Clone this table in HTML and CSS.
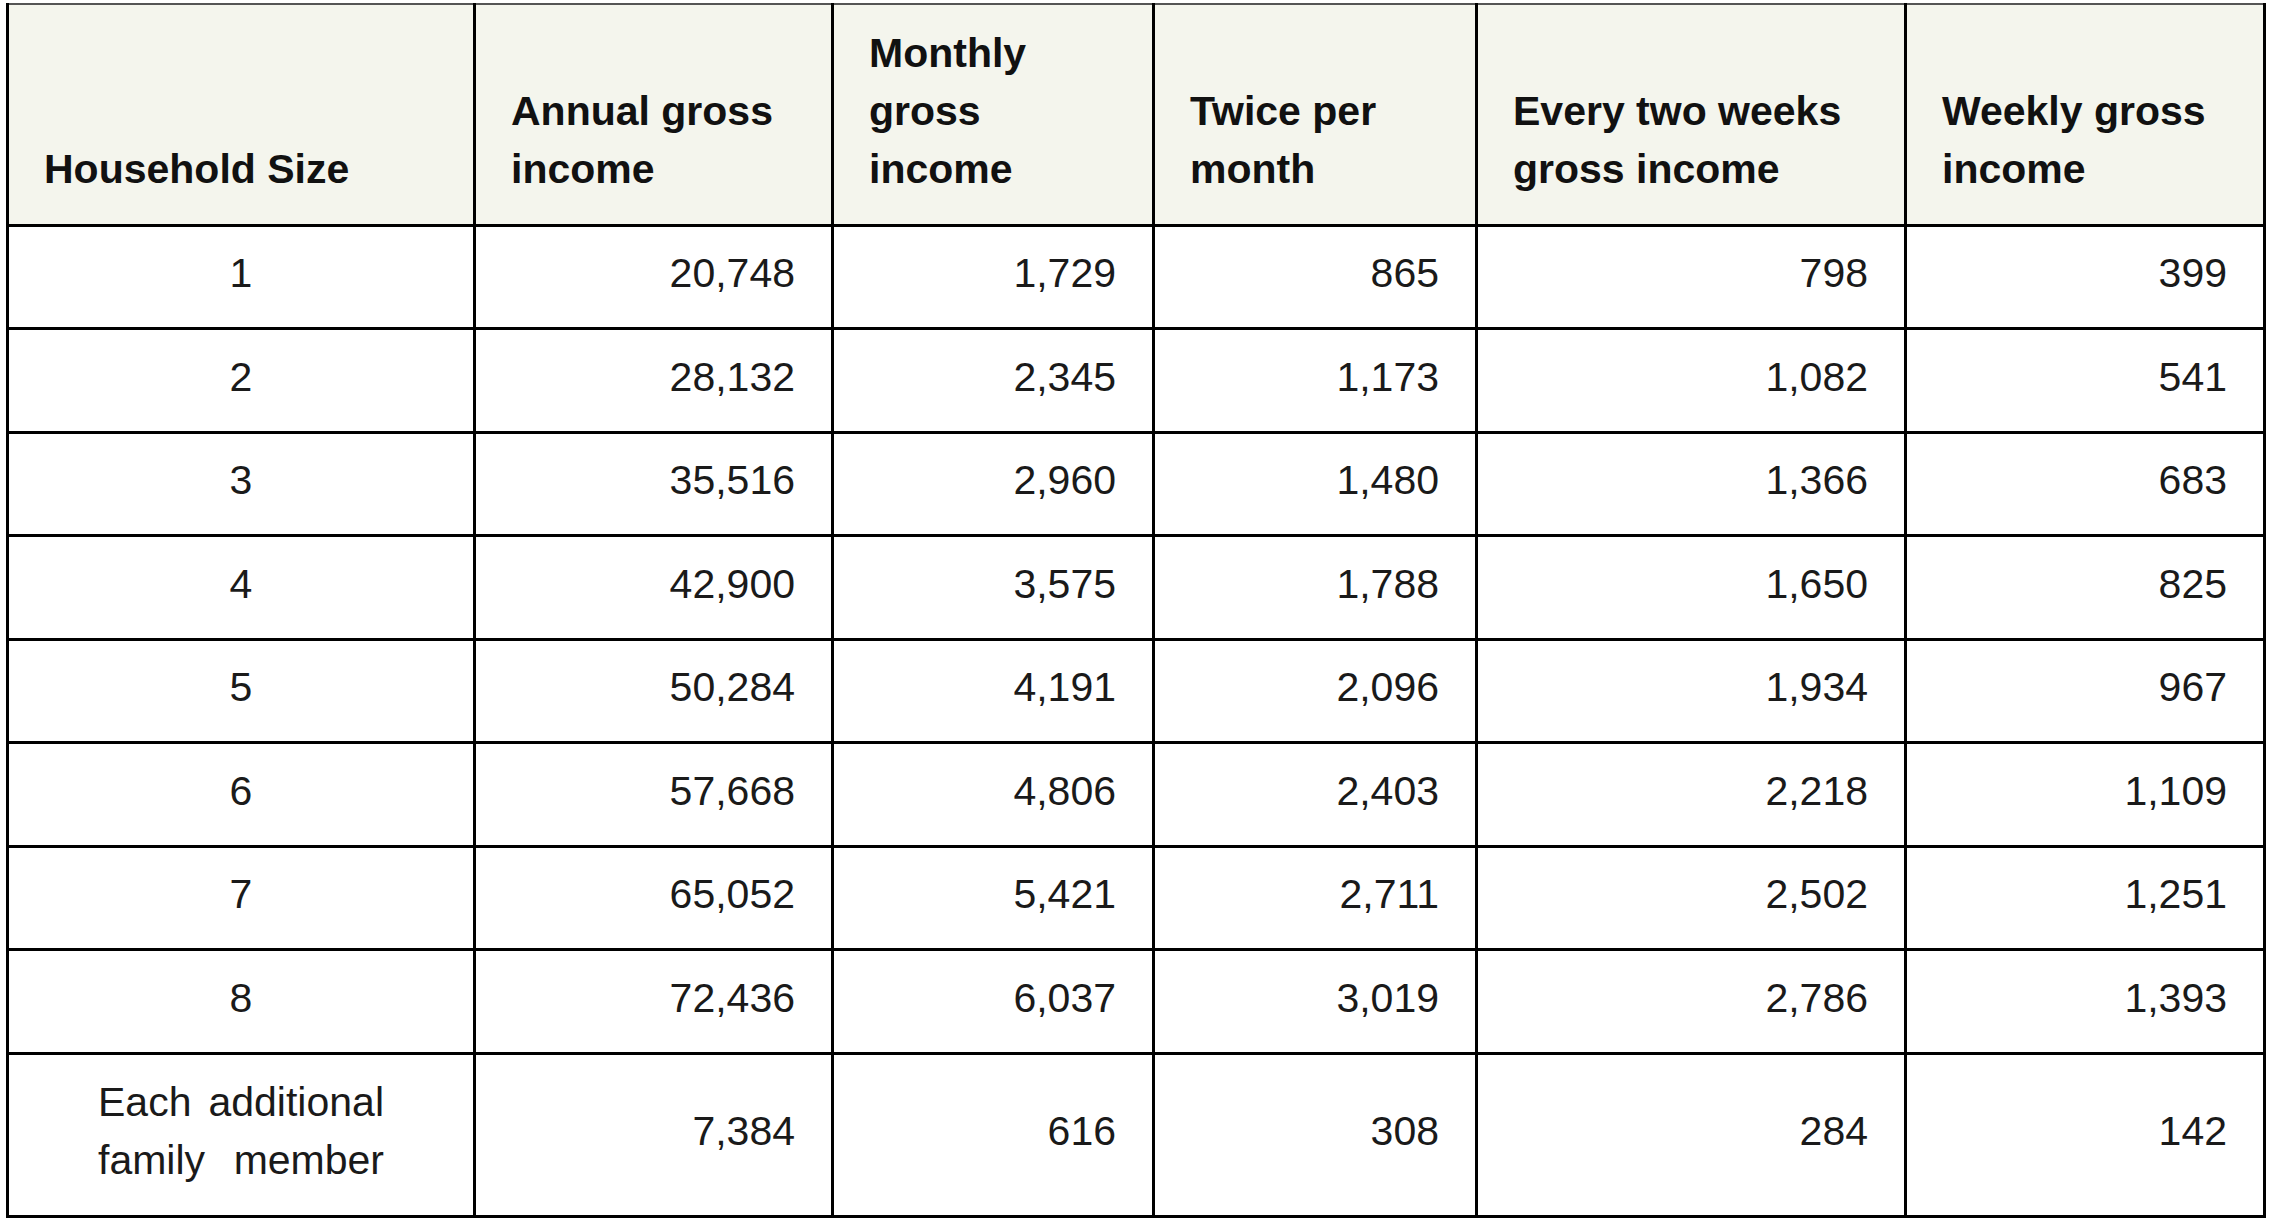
FILE: index.html
```html
<!DOCTYPE html>
<html lang="en">
<head>
<meta charset="utf-8">
<title>Household income limits</title>
<link rel="stylesheet" href="styles.css">
</head>
<body>
<table class="income-table">
  <colgroup>
    <col class="c-size">
    <col class="c-annual">
    <col class="c-monthly">
    <col class="c-twice">
    <col class="c-biweekly">
    <col class="c-weekly">
  </colgroup>
  <thead>
    <tr>
      <th>Household Size</th>
      <th>Annual gross<br>income</th>
      <th>Monthly<br>gross<br>income</th>
      <th>Twice per<br>month</th>
      <th>Every two weeks<br>gross income</th>
      <th>Weekly gross<br>income</th>
    </tr>
  </thead>
  <tbody>
    <tr><td class="size">1</td><td>20,748</td><td>1,729</td><td>865</td><td>798</td><td>399</td></tr>
    <tr><td class="size">2</td><td>28,132</td><td>2,345</td><td>1,173</td><td>1,082</td><td>541</td></tr>
    <tr><td class="size">3</td><td>35,516</td><td>2,960</td><td>1,480</td><td>1,366</td><td>683</td></tr>
    <tr><td class="size">4</td><td>42,900</td><td>3,575</td><td>1,788</td><td>1,650</td><td>825</td></tr>
    <tr><td class="size">5</td><td>50,284</td><td>4,191</td><td>2,096</td><td>1,934</td><td>967</td></tr>
    <tr><td class="size">6</td><td>57,668</td><td>4,806</td><td>2,403</td><td>2,218</td><td>1,109</td></tr>
    <tr><td class="size">7</td><td>65,052</td><td>5,421</td><td>2,711</td><td>2,502</td><td>1,251</td></tr>
    <tr><td class="size">8</td><td>72,436</td><td>6,037</td><td>3,019</td><td>2,786</td><td>1,393</td></tr>
    <tr class="extra"><td class="size"><span class="justified">Each additional family member</span></td><td>7,384</td><td>616</td><td>308</td><td>284</td><td>142</td></tr>
  </tbody>
</table>
</body>
</html>
```

FILE: styles.css
```css
html, body {
  margin: 0;
  padding: 0;
  background: #ffffff;
}

body {
  font-family: "Liberation Sans", Arial, sans-serif;
  color: #1a1a1a;
}

.income-table {
  margin: 3px 0 0 6px;
  width: 2257px;
  table-layout: fixed;
  border-collapse: collapse;
  font-size: 41px;
}

.c-size { width: 467px; }
.c-annual { width: 358px; }
.c-monthly { width: 321px; }
.c-twice { width: 323px; }
.c-biweekly { width: 429px; }
.c-weekly { width: 359px; }

.income-table th,
.income-table td {
  border: 3px solid #000;
}

.income-table thead tr {
  height: 221px;
}

.income-table th {
  background: #f4f5ed;
  color: #111;
  font-weight: bold;
  text-align: left;
  vertical-align: bottom;
  line-height: 58px;
  padding: 0 20px 26px 35px;
  border-top: 2px solid #555;
}

.income-table tbody tr {
  height: 103.5px;
}

.income-table td {
  text-align: right;
  vertical-align: middle;
  padding: 0 36px 7px 20px;
  line-height: 48px;
}

.income-table td.size {
  text-align: center;
  padding: 0 0 7px 0;
}

.income-table tr.extra {
  height: 163px;
}

.justified {
  display: inline-block;
  width: 286px;
  line-height: 58px;
  text-align: justify;
  text-align-last: justify;
}
```
